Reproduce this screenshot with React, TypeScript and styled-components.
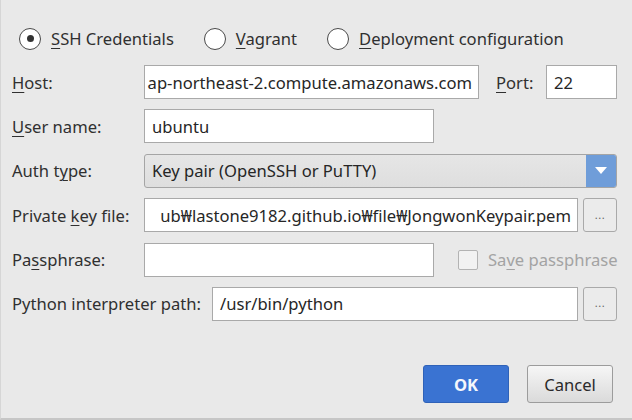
import React from "react";
import styled, { createGlobalStyle } from "styled-components";

const Global = createGlobalStyle`
  html, body { margin: 0; padding: 0; background: #e9e9e9; }
  body { font-family: "Noto Sans", "Open Sans", sans-serif; }
  * { box-sizing: border-box; }
`;

const Dialog = styled.div`
  width: 632px;
  height: 420px;
  background: #e9e9e9;
  border-bottom: 2px solid #c6c6c6;
  border-left: 1px solid #d6d6d6;
  padding: 28px 15px 0 10px;
  display: flex;
  flex-direction: column;
  font-size: 16.6px;
  color: #303030;
`;

const RadioRow = styled.div`
  display: flex;
  align-items: center;
  gap: 30px;
  height: 21px;
  padding-left: 8px;
`;

const RadioItem = styled.label`
  display: flex;
  align-items: center;
  gap: 10px;
  line-height: 21px;
  white-space: nowrap;
`;

const RadioCircle = styled.span<{ $checked?: boolean }>`
  width: 22px;
  height: 22px;
  border-radius: 50%;
  border: 1.5px solid #4a4a4a;
  background: #fff;
  display: flex;
  align-items: center;
  justify-content: center;
  &::after {
    content: "";
    width: 7px;
    height: 7px;
    border-radius: 50%;
    background: ${(p) => (p.$checked ? "#333" : "transparent")};
  }
`;

const underline = `
  text-decoration: underline;
  text-underline-offset: 3px;
  text-decoration-thickness: 1px;
`;

const Mn = styled.span`
  ${underline}
`;

const RadioText = styled.span`
  &::first-letter {
    ${underline}
  }
`;

const Form = styled.div`
  display: flex;
  flex-direction: column;
  gap: 10.4px;
  margin-top: 16px;
`;

const Row = styled.div`
  display: flex;
  align-items: center;
  height: 34px;
`;

const Label = styled.span<{ $w: number; $ml?: number; $u?: boolean }>`
  width: ${(p) => p.$w}px;
  margin-left: ${(p) => p.$ml ?? 0}px;
  flex: none;
  white-space: nowrap;
  padding-left: 1px;
  &::first-letter {
    ${(p) => (p.$u ? underline : "")}
  }
`;

const Field = styled.div<{ $w: number; $clip?: boolean }>`
  width: ${(p) => p.$w}px;
  height: 34px;
  flex: none;
  background: #fff;
  border: 1px solid #a9a9a9;
  display: flex;
  align-items: center;
  justify-content: ${(p) => (p.$clip ? "flex-end" : "flex-start")};
  overflow: hidden;
  white-space: nowrap;
  padding: 0 ${(p) => (p.$clip ? 6 : 7)}px 0 7px;
  color: #262626;
`;

const Combo = styled.div`
  width: 473px;
  height: 34px;
  flex: none;
  border: 1px solid #a5a5a5;
  border-radius: 3px;
  background: linear-gradient(#e6e6e6, #dedede);
  display: flex;
  align-items: stretch;
  overflow: hidden;
`;

const ComboText = styled.span`
  flex: 1;
  display: flex;
  align-items: center;
  padding-left: 7px;
  color: #262626;
`;

const ComboArrow = styled.span`
  width: 30px;
  background: #6f9dd9;
  display: flex;
  align-items: center;
  justify-content: center;
`;

const DotsButton = styled.div`
  width: 34px;
  height: 34px;
  margin-left: 5px;
  flex: none;
  border: 1px solid #a9a9a9;
  border-radius: 3px;
  background: #ebebeb;
  display: flex;
  align-items: center;
  justify-content: center;
  color: #666;
  font-size: 11px;
  letter-spacing: 0.5px;
  padding-bottom: 2px;
`;

const CheckBox = styled.span`
  width: 20px;
  height: 20px;
  margin-left: 24px;
  flex: none;
  border: 1px solid #b3b3b3;
  border-radius: 2px;
  background: #f2f2f2;
`;

const CheckLabel = styled.span`
  margin-left: 10px;
  color: #a3a3a3;
  white-space: nowrap;
`;

const Footer = styled.div`
  margin-top: auto;
  margin-bottom: 15px;
  display: flex;
  justify-content: flex-end;
  gap: 18px;
  padding-right: 4px;
`;

const Button = styled.div<{ $primary?: boolean }>`
  width: 86px;
  height: 38px;
  border-radius: 3px;
  display: flex;
  align-items: center;
  justify-content: center;
  border: 1px solid ${(p) => (p.$primary ? "#2f62b8" : "#9c9c9c")};
  background: ${(p) =>
    p.$primary ? "#3a73d2" : "linear-gradient(#f6f6f6, #dadada)"};
  color: ${(p) => (p.$primary ? "#f4f7fc" : "#2a2a2a")};
  font-weight: ${(p) => (p.$primary ? 700 : 400)};
`;

export default function App() {
  return (
    <>
      <Global />
      <Dialog>
        <RadioRow>
          <RadioItem>
            <RadioCircle $checked />
            <RadioText>SSH Credentials</RadioText>
          </RadioItem>
          <RadioItem>
            <RadioCircle />
            <RadioText>Vagrant</RadioText>
          </RadioItem>
          <RadioItem>
            <RadioCircle />
            <RadioText>Deployment configuration</RadioText>
          </RadioItem>
        </RadioRow>
        <Form>
          <Row>
            <Label $w={133} $u>
              Host:
            </Label>
            <Field $w={335} $clip>
              ap-northeast-2.compute.amazonaws.com
            </Field>
            <Label $w={51} $ml={16} $u>
              Port:
            </Label>
            <Field $w={71}>22</Field>
          </Row>
          <Row>
            <Label $w={133} $u>
              User name:
            </Label>
            <Field $w={290}>ubuntu</Field>
          </Row>
          <Row>
            <Label $w={133}>
              Auth t<Mn>y</Mn>pe:
            </Label>
            <Combo>
              <ComboText>Key pair (OpenSSH or PuTTY)</ComboText>
              <ComboArrow>
                <svg width="12" height="8" viewBox="0 0 12 8">
                  <path d="M0 0 L12 0 L6 7 Z" fill="#fff" />
                </svg>
              </ComboArrow>
            </Combo>
          </Row>
          <Row>
            <Label $w={133}>
              Private <Mn>k</Mn>ey file:
            </Label>
            <Field $w={434} $clip>
              ub₩lastone9182.github.io₩file₩JongwonKeypair.pem
            </Field>
            <DotsButton>...</DotsButton>
          </Row>
          <Row>
            <Label $w={133}>
              Pa<Mn>s</Mn>sphrase:
            </Label>
            <Field $w={290} />
            <CheckBox />
            <CheckLabel>
              Sa<Mn>v</Mn>e passphrase
            </CheckLabel>
          </Row>
          <Row>
            <Label $w={201}>Python interpreter path:</Label>
            <Field $w={366}>/usr/bin/python</Field>
            <DotsButton>...</DotsButton>
          </Row>
        </Form>
        <Footer>
          <Button $primary>OK</Button>
          <Button>Cancel</Button>
        </Footer>
      </Dialog>
    </>
  );
}
